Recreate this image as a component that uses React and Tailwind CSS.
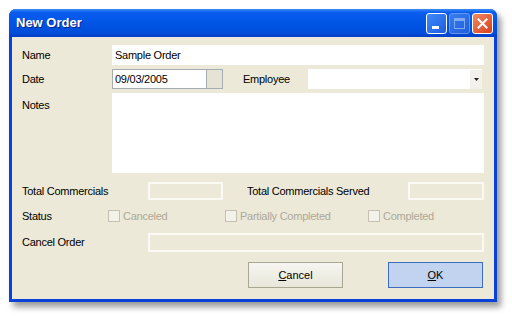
export default function App() {
  const label = 'text-[11px] text-black tracking-[-0.25px]'
  const disabledBox = 'h-full bg-[#ECE9D8] border-2 border-[#FAF9F4]'

  return (
    <div className="w-[512px] h-[316px] bg-white pt-[9px] pl-[9px]" style={{ fontFamily: '"Liberation Sans", Arial, sans-serif' }}>
      <div className="w-[488px] h-[293px] rounded-t-[7px] flex flex-col bg-[#0842D6] shadow-[4px_5px_6px_rgba(0,0,0,0.4)]">
        {/* title bar */}
        <div className="h-[28px] rounded-t-[7px] flex items-center pl-[7px] pr-[4px] bg-[linear-gradient(to_bottom,#3C8CF5_0%,#0A5DEF_12%,#0055E5_50%,#004DDA_85%,#003FC8_100%)]">
          <span className="text-white font-bold text-[13px] [text-shadow:1px_1px_0_#0A1E8A]">New Order</span>
          <div className="ml-auto flex gap-[2px] mt-[1px]">
            <div className="w-[21px] h-[21px] rounded-[3px] border border-white bg-[linear-gradient(135deg,#3E8AF9,#1F5DE0)] relative">
              <div className="absolute left-[5px] bottom-[4px] w-[7px] h-[3px] bg-white" />
            </div>
            <div className="w-[21px] h-[21px] rounded-[3px] border border-[#8FB0F0] bg-[linear-gradient(135deg,#4A8CF0,#2F66DC)] relative opacity-70">
              <div className="absolute left-[4px] top-[4px] w-[11px] h-[11px] border border-[#B8CCF5] border-t-[3px]" />
            </div>
            <div className="w-[21px] h-[21px] rounded-[3px] border border-white bg-[linear-gradient(135deg,#F08A62,#D8401E)] flex items-center justify-center">
              <svg width="11" height="11" viewBox="0 0 11 11">
                <path d="M1.5 1.5 L9.5 9.5 M9.5 1.5 L1.5 9.5" stroke="white" strokeWidth="2" strokeLinecap="square" />
              </svg>
            </div>
          </div>
        </div>

        {/* body */}
        <div className="flex-1 mx-[3px] mb-[3px] bg-[#ECE9D8] pt-[8px] pl-[10px] pr-[10px] flex flex-col">
          <div className="flex items-center h-[20px]">
            <span className={`${label} w-[90px]`}>Name</span>
            <div className="flex-1 h-full bg-white flex items-center px-[3px] text-[11px] tracking-[-0.25px]">Sample Order</div>
          </div>

          <div className="flex items-center h-[20px] mt-[4px]">
            <span className={`${label} w-[90px]`}>Date</span>
            <div className="w-[94px] h-full bg-white border border-[#A5ACB2] border-r-0 flex items-center px-[2px] text-[11px] tracking-[-0.25px]">09/03/2005</div>
            <div className="w-[17px] h-full bg-[#E6E3D4] border border-[#A5ACB2]" />
            <span className={`${label} ml-[20px] w-[65px]`}>Employee</span>
            <div className="flex-1 mr-[2px] h-full bg-white flex items-center justify-end">
              <div className="w-[12px] h-[19px] bg-[#F2F1EC] flex items-center justify-center">
                <svg width="5" height="3" viewBox="0 0 5 3"><path d="M0 0 H5 L2.5 3 Z" fill="#222" /></svg>
              </div>
            </div>
          </div>

          <div className="flex h-[80px] mt-[4px]">
            <span className={`${label} w-[90px] pt-[4px]`}>Notes</span>
            <div className="flex-1 h-full bg-white" />
          </div>

          <div className="flex items-center h-[18px] mt-[9px]">
            <span className={`${label} w-[126px]`}>Total Commercials</span>
            <div className={`${disabledBox} w-[75px]`} />
            <span className={`${label} ml-[24px] flex-1`}>Total Commercials Served</span>
            <div className={`${disabledBox} w-[76px]`} />
          </div>

          <div className="flex items-center h-[16px] mt-[8px]">
            <span className={`${label} w-[86px]`}>Status</span>
            {[['Canceled', 'w-[117px]'], ['Partially Completed', 'w-[143px]'], ['Completed', '']].map(([t, w]) => (
              <div key={t} className={`flex items-center ${w}`}>
                <div className="w-[12px] h-[12px] border border-[#C4C1B0] bg-[#F3F2EA]" />
                <span className="ml-[3px] text-[11px] tracking-[-0.25px] text-[#ACA899]">{t}</span>
              </div>
            ))}
          </div>

          <div className="flex items-center h-[19px] mt-[9px]">
            <span className={`${label} w-[126px]`}>Cancel Order</span>
            <div className={`${disabledBox} flex-1`} />
          </div>

          <div className="flex justify-end h-[26px] mt-[10px] pr-[1px]">
            <button className="w-[95px] h-full border border-[#A9A794] bg-[linear-gradient(to_bottom,#F6F5F0,#E9E7DA)] text-[11px]">
              <span className="underline">C</span>ancel
            </button>
            <button className="ml-[45px] w-[95px] h-full border border-[#3C6DC2] bg-[#C1D3EF] text-[11px]">
              <span className="underline">O</span>K
            </button>
          </div>
        </div>
      </div>
    </div>
  )
}
